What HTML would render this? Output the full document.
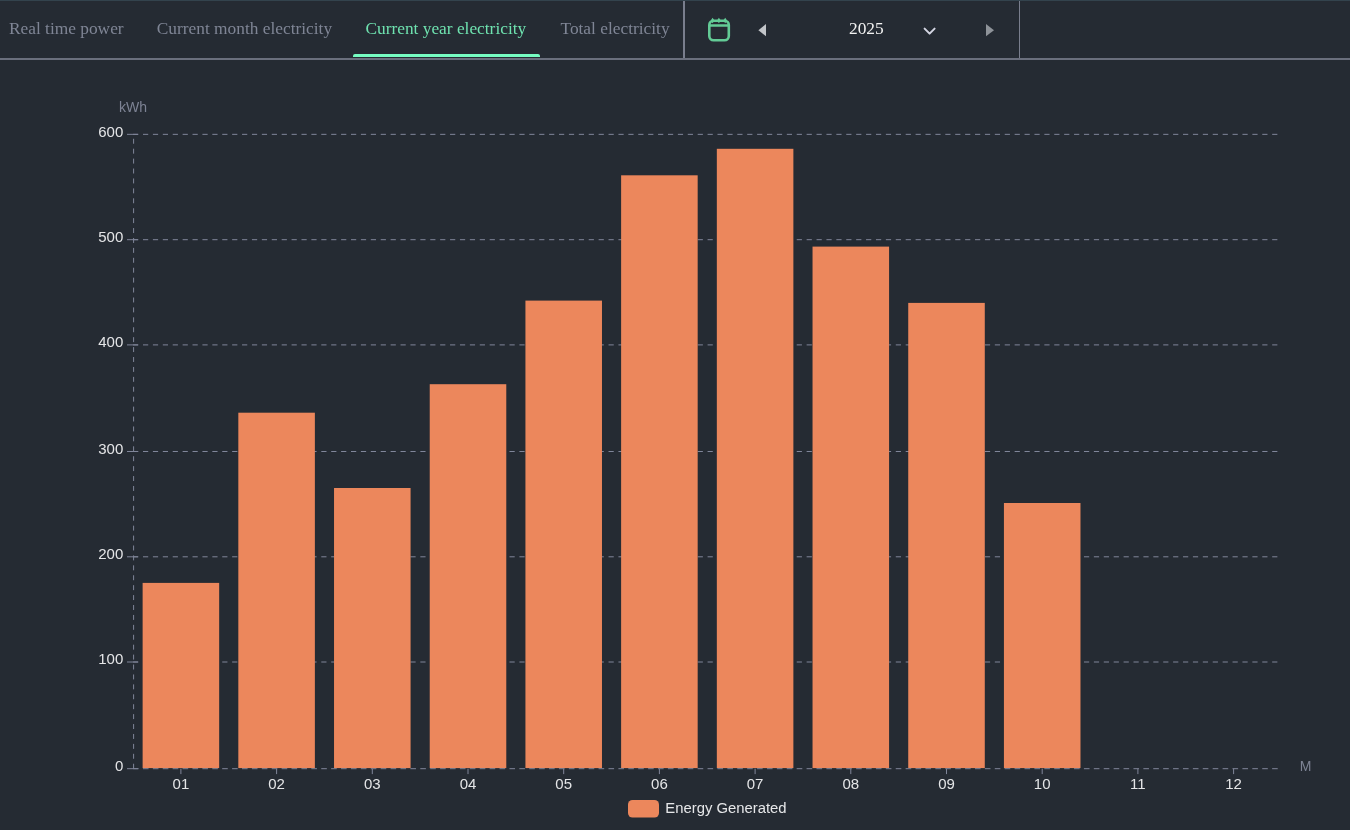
<!DOCTYPE html>
<html><head><meta charset="utf-8">
<style>
html,body{margin:0;padding:0;background:#252b33;width:1350px;height:830px;overflow:hidden}
body{position:relative;font-family:"Liberation Sans",sans-serif}
.topline{position:absolute;left:0;top:0;width:1350px;height:1px;background:#33434d}
.bar{position:absolute;left:0;top:0;width:1350px;height:60px}
.tab{position:absolute;top:19px;font-family:"Liberation Serif",serif;font-size:17.35px;line-height:20px;color:#7f8595;white-space:nowrap}
.tab.act{color:#6fe3b0}
.ul{position:absolute;left:352.8px;top:54px;width:187.7px;height:3px;background:#76fdc2;border-radius:2px 2px 0 0}
.bline{position:absolute;left:0;top:58px;width:1350px;height:2px;background:#6a6f7d}
.sep{position:absolute;top:1px;width:1.5px;height:57px;background:#797e8d}
.year{position:absolute;left:849px;top:18.6px;font-family:"Liberation Serif",serif;font-size:17.35px;line-height:20px;color:#f2f2f2}
svg text.al{font-family:"Liberation Sans",sans-serif;font-size:15px;fill:#e4e5e7}
svg text.an{font-family:"Liberation Sans",sans-serif;font-size:14px;fill:#7d8394}
svg text.lg{font-family:"Liberation Sans",sans-serif;font-size:14.85px;fill:#e6e7e9}
svg.chart{position:absolute;left:0;top:0;will-change:transform}
svg.icons{will-change:transform}
.tabs{position:absolute;left:0;top:0;width:1350px;height:60px;will-change:transform}
</style></head><body>
<div class="tabs">
<div class="topline"></div>
<div class="tab" style="left:9px">Real time power</div>
<div class="tab" style="left:156.8px">Current month electricity</div>
<div class="tab act" style="left:365.4px">Current year electricity</div>
<div class="tab" style="left:560.5px">Total electricity</div>
<div class="ul"></div>
<div class="bline"></div>
<div class="sep" style="left:683px"></div>
<div class="sep" style="left:1018.5px"></div>
<svg class="icons" style="position:absolute;left:0;top:0" width="1350" height="60">
  <rect x="709.3" y="20.7" width="19.5" height="19.6" rx="4.2" fill="none" stroke="#63cb96" stroke-width="2.6"/>
  <line x1="709" y1="25.5" x2="729" y2="25.5" stroke="#63cb96" stroke-width="2.5"/>
  <path d="M712.6 17.7 L714.5 20.5 L712.6 23.2 L710.7 20.5 Z M718.9 17.7 L720.8 20.5 L718.9 23.2 L717 20.5 Z M725.2 17.7 L727.1 20.5 L725.2 23.2 L723.3 20.5 Z" fill="#63cb96"/>
  <path d="M758.4 30.2 L766 24 L766 36.3 Z" fill="#c2c5c9"/>
  <path d="M924.6 28.6 L929.6 33.6 L934.6 28.6" fill="none" stroke="#d3d5e2" stroke-width="2" stroke-linecap="round" stroke-linejoin="round"/>
  <path d="M986 24 L994 30.2 L986 36.3 Z" fill="#8e9399"/>
</svg>
<div class="year">2025</div>
</div>
<svg class="chart" width="1350" height="830">
<line x1="133.1" y1="662.00" x2="1281.4" y2="662.00" stroke="#80869a" stroke-width="1" stroke-dasharray="5.2 4.705"/>
<line x1="133.1" y1="556.80" x2="1281.4" y2="556.80" stroke="#80869a" stroke-width="1" stroke-dasharray="5.2 4.705"/>
<line x1="133.1" y1="451.50" x2="1281.4" y2="451.50" stroke="#80869a" stroke-width="1" stroke-dasharray="5.2 4.705"/>
<line x1="133.1" y1="344.90" x2="1281.4" y2="344.90" stroke="#80869a" stroke-width="1" stroke-dasharray="5.2 4.705"/>
<line x1="133.1" y1="239.70" x2="1281.4" y2="239.70" stroke="#80869a" stroke-width="1" stroke-dasharray="5.2 4.705"/>
<line x1="133.1" y1="134.35" x2="1281.4" y2="134.35" stroke="#80869a" stroke-width="1" stroke-dasharray="5.2 4.705"/>
<rect x="142.62" y="582.90" width="76.55" height="185.20" fill="#ec875c"/>
<rect x="238.32" y="412.70" width="76.55" height="355.40" fill="#ec875c"/>
<rect x="334.03" y="488.00" width="76.55" height="280.10" fill="#ec875c"/>
<rect x="429.73" y="384.20" width="76.55" height="383.90" fill="#ec875c"/>
<rect x="525.43" y="300.60" width="76.55" height="467.50" fill="#ec875c"/>
<rect x="621.12" y="175.30" width="76.55" height="592.80" fill="#ec875c"/>
<rect x="716.83" y="148.80" width="76.55" height="619.30" fill="#ec875c"/>
<rect x="812.53" y="246.60" width="76.55" height="521.50" fill="#ec875c"/>
<rect x="908.23" y="302.90" width="76.55" height="465.20" fill="#ec875c"/>
<rect x="1003.93" y="503.00" width="76.55" height="265.10" fill="#ec875c"/>
<line x1="133.05" y1="768.7" x2="1281.4" y2="768.7" stroke="#80869a" stroke-width="1" stroke-dasharray="5.6 4.305"/>
<line x1="133.6" y1="768.7" x2="133.6" y2="134.35" stroke="#80869a" stroke-width="1" stroke-dasharray="4.96 4.96"/>
<line x1="127" y1="768.70" x2="138" y2="768.70" stroke="#80869a" stroke-width="1"/>
<text x="123.3" y="771.10" text-anchor="end" class="al">0</text>
<line x1="127" y1="662.00" x2="138" y2="662.00" stroke="#80869a" stroke-width="1"/>
<text x="123.3" y="664.40" text-anchor="end" class="al">100</text>
<line x1="127" y1="556.80" x2="138" y2="556.80" stroke="#80869a" stroke-width="1"/>
<text x="123.3" y="559.20" text-anchor="end" class="al">200</text>
<line x1="127" y1="451.50" x2="138" y2="451.50" stroke="#80869a" stroke-width="1"/>
<text x="123.3" y="453.90" text-anchor="end" class="al">300</text>
<line x1="127" y1="344.90" x2="138" y2="344.90" stroke="#80869a" stroke-width="1"/>
<text x="123.3" y="347.30" text-anchor="end" class="al">400</text>
<line x1="127" y1="239.70" x2="138" y2="239.70" stroke="#80869a" stroke-width="1"/>
<text x="123.3" y="242.10" text-anchor="end" class="al">500</text>
<line x1="127" y1="134.35" x2="138" y2="134.35" stroke="#80869a" stroke-width="1"/>
<text x="123.3" y="136.75" text-anchor="end" class="al">600</text>
<line x1="180.90" y1="768.7" x2="180.90" y2="774.1" stroke="#80869a" stroke-width="1"/>
<text x="180.90" y="789" text-anchor="middle" class="al">01</text>
<line x1="276.60" y1="768.7" x2="276.60" y2="774.1" stroke="#80869a" stroke-width="1"/>
<text x="276.60" y="789" text-anchor="middle" class="al">02</text>
<line x1="372.30" y1="768.7" x2="372.30" y2="774.1" stroke="#80869a" stroke-width="1"/>
<text x="372.30" y="789" text-anchor="middle" class="al">03</text>
<line x1="468.00" y1="768.7" x2="468.00" y2="774.1" stroke="#80869a" stroke-width="1"/>
<text x="468.00" y="789" text-anchor="middle" class="al">04</text>
<line x1="563.70" y1="768.7" x2="563.70" y2="774.1" stroke="#80869a" stroke-width="1"/>
<text x="563.70" y="789" text-anchor="middle" class="al">05</text>
<line x1="659.40" y1="768.7" x2="659.40" y2="774.1" stroke="#80869a" stroke-width="1"/>
<text x="659.40" y="789" text-anchor="middle" class="al">06</text>
<line x1="755.10" y1="768.7" x2="755.10" y2="774.1" stroke="#80869a" stroke-width="1"/>
<text x="755.10" y="789" text-anchor="middle" class="al">07</text>
<line x1="850.80" y1="768.7" x2="850.80" y2="774.1" stroke="#80869a" stroke-width="1"/>
<text x="850.80" y="789" text-anchor="middle" class="al">08</text>
<line x1="946.50" y1="768.7" x2="946.50" y2="774.1" stroke="#80869a" stroke-width="1"/>
<text x="946.50" y="789" text-anchor="middle" class="al">09</text>
<line x1="1042.20" y1="768.7" x2="1042.20" y2="774.1" stroke="#80869a" stroke-width="1"/>
<text x="1042.20" y="789" text-anchor="middle" class="al">10</text>
<line x1="1137.90" y1="768.7" x2="1137.90" y2="774.1" stroke="#80869a" stroke-width="1"/>
<text x="1137.90" y="789" text-anchor="middle" class="al">11</text>
<line x1="1233.60" y1="768.7" x2="1233.60" y2="774.1" stroke="#80869a" stroke-width="1"/>
<text x="1233.60" y="789" text-anchor="middle" class="al">12</text>
<text x="133" y="111.5" text-anchor="middle" class="an">kWh</text>
<text x="1299.8" y="771.1" class="an">M</text>
<rect x="628" y="800" width="31" height="17.6" rx="4.5" fill="#ec875c"/>
<text x="665.3" y="813" class="lg">Energy Generated</text>
</svg>
</body></html>
